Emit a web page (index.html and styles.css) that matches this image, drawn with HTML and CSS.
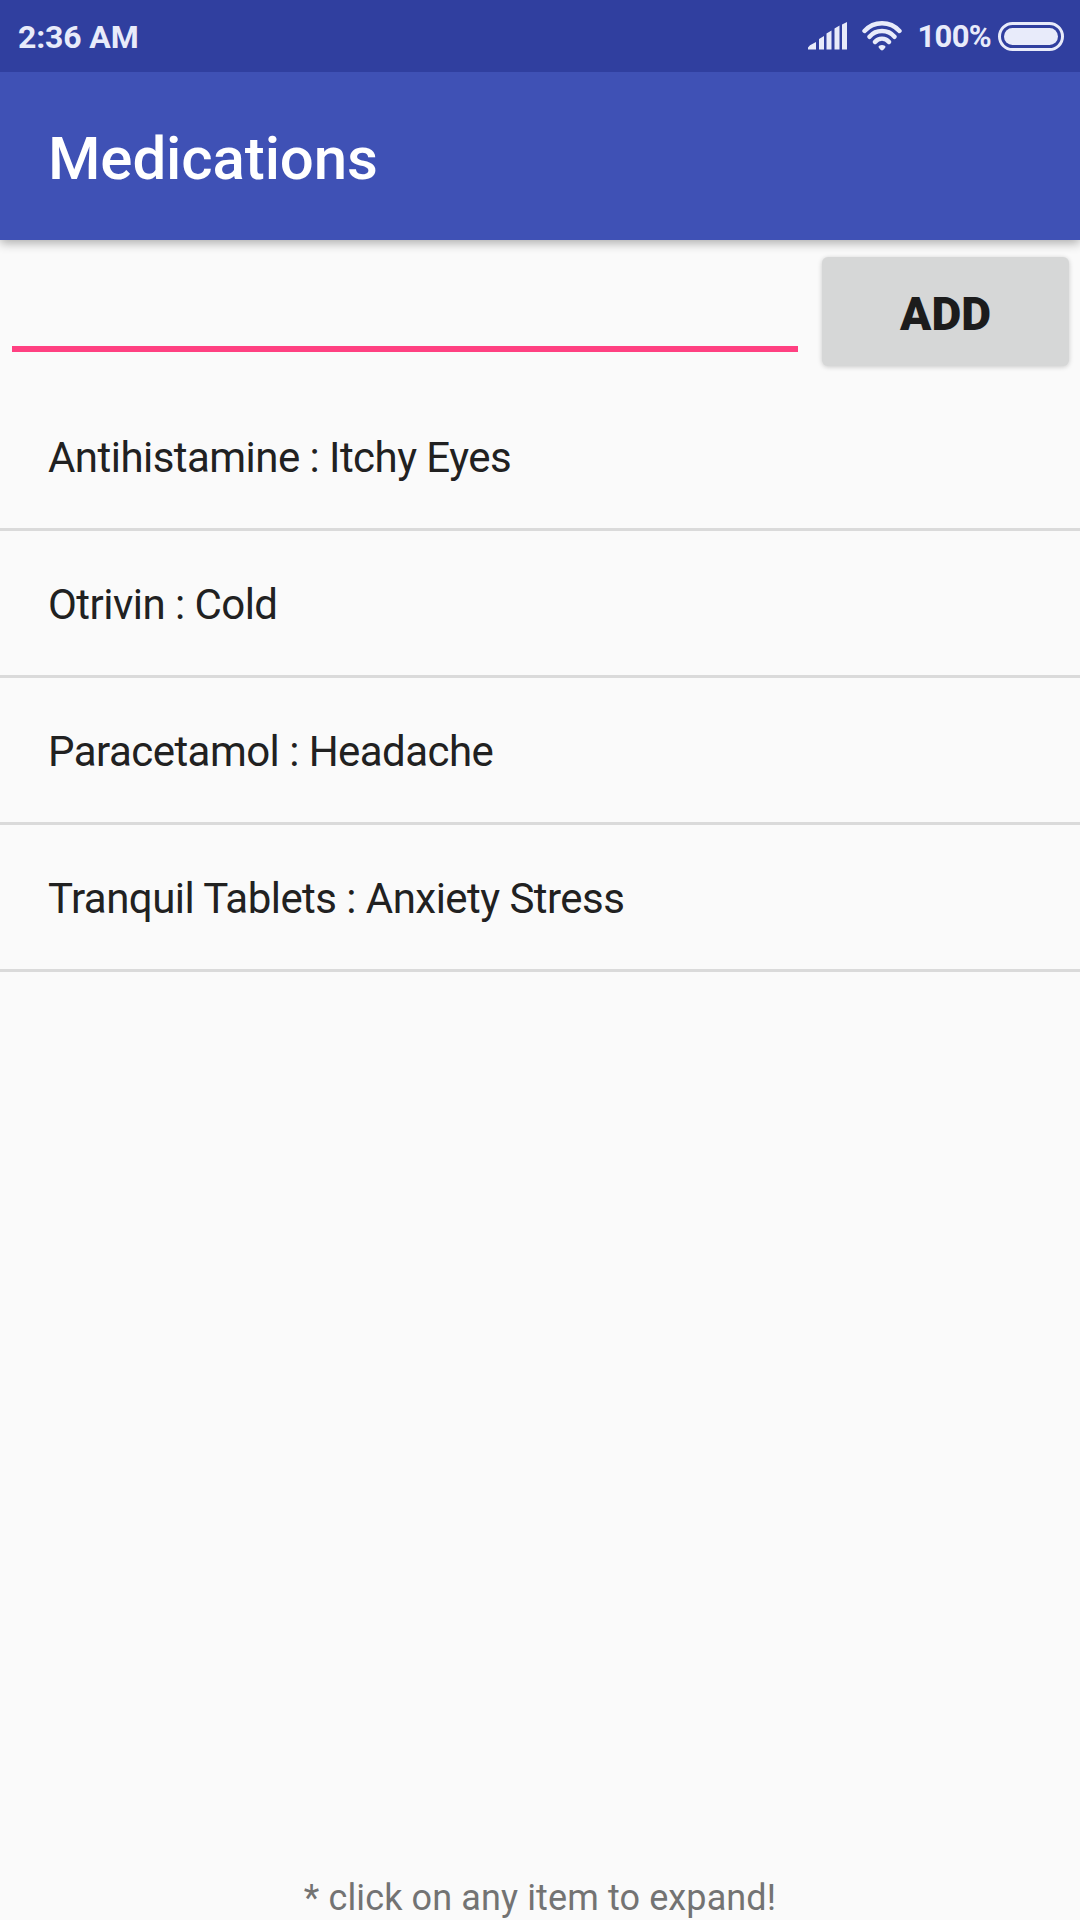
FILE: index.html
```html
<!DOCTYPE html>
<html lang="en">
<head>
    <meta charset="UTF-8">
    <meta name="viewport" content="width=device-width, initial-scale=1.0">
    <title>Medications</title>
    <link rel="stylesheet" href="styles.css">
</head>
<body>
    <div class="status-bar">
        <span class="clock">2:36 AM</span>
        <div class="status-icons">
            <svg class="signal" width="40" height="28" viewBox="0 0 40 28">
                <path d="M0 27.5v-2l2-2.200 6-3.300v7.500zM11 27.500v-10.500l5-3v13.500zM18.500 27.500v-16l5-3v19zM26.500 27.500v-21l5-3v24zM34 27.500v-25l5-2.500v27.500z"/>
            </svg>
            <svg class="wifi" width="40" height="30" viewBox="0 0 40 30">
                <path class="arc" d="M2.500 10a23.700 23.700 0 0 1 35 0M7.500 15.800a16.500 16.500 0 0 1 25 0M13 21a9 9 0 0 1 14 0"/>
                <path d="M20 29.500q-1 0-3.200-2.800-.8-1.200.4-1.900a5.500 5.500 0 0 1 5.600 0q1.200.7.4 1.900-2.200 2.800-3.200 2.800z"/>
            </svg>
            <span class="battery-level">100%</span>
            <div class="battery"></div>
        </div>
    </div>

    <header class="app-bar">
        <h1>Medications</h1>
    </header>

    <main>
        <form class="add-form">
            <input class="med-input" type="text" aria-label="Medication">
            <button class="add-button" type="button">ADD</button>
        </form>

        <ul class="med-list">
            <li>Antihistamine : Itchy Eyes</li>
            <li>Otrivin : Cold</li>
            <li>Paracetamol : Headache</li>
            <li>Tranquil Tablets : Anxiety Stress</li>
        </ul>
    </main>

    <p class="hint">* click on any item to expand!</p>
</body>
</html>
```
FILE: styles.css
```css
* {
    box-sizing: border-box;
}

body {
    display: flex;
    flex-direction: column;
    height: 1920px;
    margin: 0;
    background: #fafafa;
    color: #212121;
    font-family: Roboto, sans-serif;
    overflow: hidden;
}

/* Status bar */
.status-bar {
    position: relative;
    z-index: 1;
    display: flex;
    justify-content: space-between;
    align-items: center;
    height: 72px;
    padding: 0 16px 0 18px;
    background: #303f9f;
    color: #e8ebfa;
    font-size: 32px;
    font-weight: 700;
}

.clock {
    padding-top: 1px;
    letter-spacing: -0.15px;
}

.status-icons {
    display: flex;
    align-items: center;
}

.status-icons svg {
    fill: #e8ebfa;
}

.wifi {
    margin: 0 16px 0 14px;
}

.wifi .arc {
    fill: none;
    stroke: #e8ebfa;
    stroke-width: 4.4;
    stroke-linecap: round;
}

.battery-level {
    font-size: 31px;
    letter-spacing: -0.7px;
}

.battery {
    width: 66px;
    height: 29px;
    margin-left: 7px;
    padding: 3px;
    border: 3px solid #e8ebfa;
    border-radius: 15px;
    background: #e8ebfa content-box;
}

/* App bar */
.app-bar {
    display: flex;
    align-items: center;
    height: 168px;
    padding: 4px 48px 0;
    background: #3f51b5;
    box-shadow: 0 3px 10px rgba(0, 0, 0, 0.32);
}

.app-bar h1 {
    margin: 0;
    color: #fff;
    font-size: 60px;
    font-weight: 500;
    letter-spacing: -0.1px;
}

/* Add form */
.add-form {
    display: flex;
    align-items: flex-start;
    height: 144px;
    padding: 17px 11px 0 12px;
}

.med-input {
    width: 786px;
    height: 95px;
    padding: 0;
    border: none;
    border-bottom: 6px solid #ff4081;
    outline: none;
    background: none;
    font: 54px Roboto, sans-serif;
}

.add-button {
    width: 247px;
    height: 109px;
    margin-left: auto;
    padding: 4px 0 0;
    border: none;
    border-radius: 6px;
    background: #d6d7d7;
    box-shadow: 0 1px 5px rgba(0, 0, 0, 0.2);
    color: #1c1c1c;
    font: 900 46px Roboto, sans-serif;
}

/* Medication list */
.med-list {
    margin: 0;
    padding: 0;
    list-style: none;
}

.med-list li {
    display: flex;
    align-items: center;
    height: 147px;
    padding: 2px 48px 0;
    border-bottom: 3px solid #dadada;
    font-size: 42px;
    letter-spacing: -0.54px;
}

.hint {
    margin: auto 0 0;
    color: #737373;
    font-size: 36px;
    line-height: 44px;
    letter-spacing: 0.12px;
    text-align: center;
}
```
